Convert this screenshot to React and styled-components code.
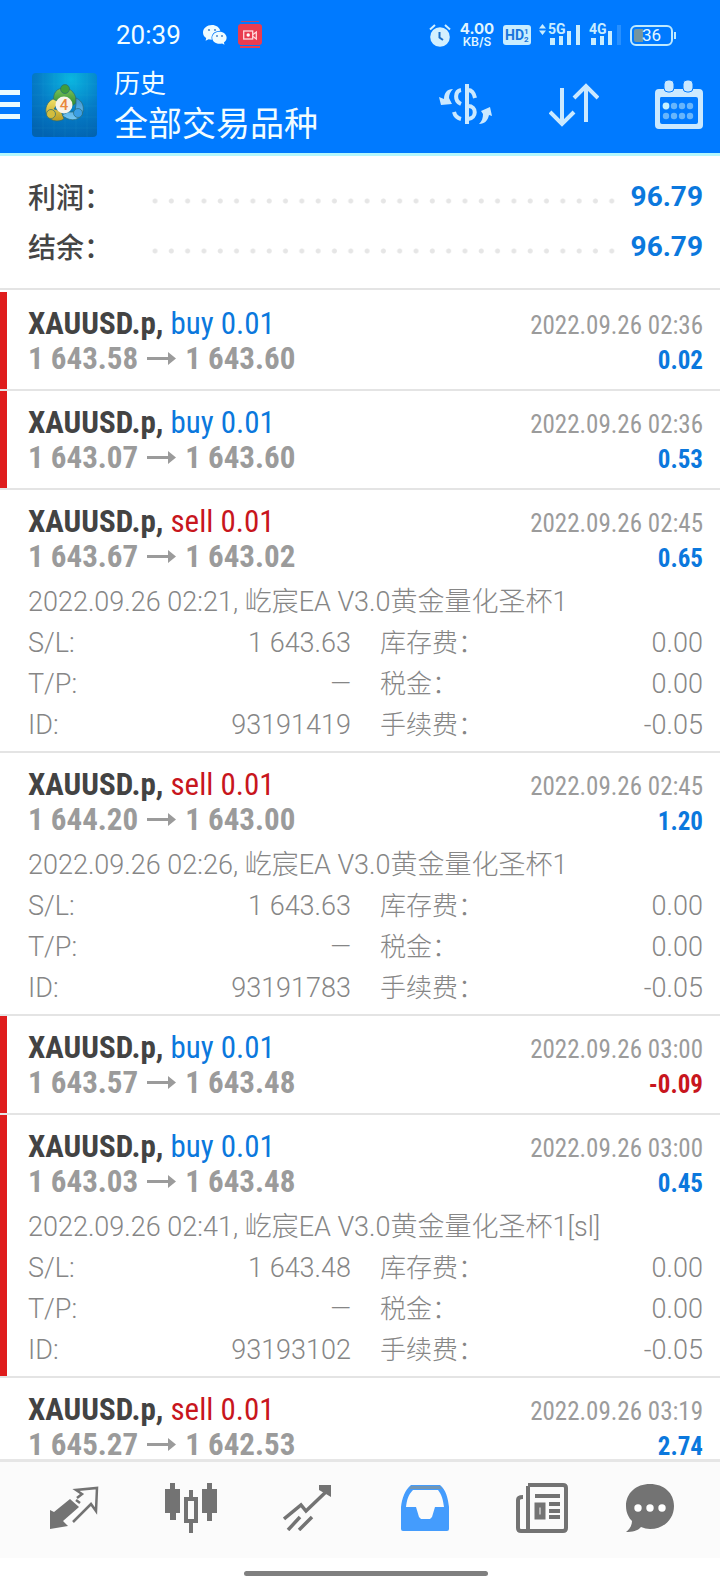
import React from "react";
import styled, { createGlobalStyle } from "styled-components";

const sans = `Roboto, "Noto Sans CJK SC", sans-serif`;
const narrow = `"Roboto Condensed", "Liberation Sans Narrow", Roboto, "Noto Sans CJK SC", sans-serif`;
const blue = "#0b78dd";
const red = "#c8161d";

const GlobalStyle = createGlobalStyle`
  * { box-sizing: border-box; }
  body { margin: 0; background: #fff; font-family: ${sans}; }
  h1, p, dl, dd, dt, ul { margin: 0; padding: 0; font-weight: inherit; }
  ul { list-style: none; }
  svg { display: block; }
`;

const Screen = styled.div`
  display: flex;
  flex-direction: column;
  height: 100vh;
  overflow: hidden;
`;

const Header = styled.header`
  flex: none;
  background: #007aff;
  color: #f2fdff;
  border-bottom: 3px solid #b4f7fc;
`;

const StatusBar = styled.div`
  display: flex;
  align-items: center;
  height: 70px;
  padding: 0 43px 0 116px;
`;

const Clock = styled.time`
  width: 87px;
  font-size: 26px;
  line-height: 30px;
`;

const StatusIcons = styled.div`
  display: flex;
  align-items: center;
  gap: ${(p) => p.$gap}px;
  margin-left: ${(p) => (p.$end ? "auto" : "0")};
`;

const Speed = styled.div`
  width: 36px;
  color: #dff5ff;
  font-family: Inter, sans-serif;
  text-align: center;
`;

const SpeedValue = styled.p`
  font-size: 15px;
  font-weight: 700;
  line-height: 14px;
`;

const SpeedUnit = styled.p`
  font-size: 12px;
  font-weight: 600;
  line-height: 12px;
`;

const Battery = styled.div`
  position: relative;
  width: 43px;
  height: 21px;
  border: 2px solid #bfeaff;
  border-radius: 6px;
  background: linear-gradient(90deg, #74959f 11px, transparent 11px);
  background-clip: content-box;
  padding: 2px;
  margin: 0 4px 0 0;
  font: 400 17px/13px Roboto, sans-serif;
  text-align: center;
  color: #e6f8ff;
  &::after {
    content: "";
    position: absolute;
    right: -5px;
    top: 5px;
    width: 2px;
    height: 7px;
    background: #bfeaff;
  }
`;

const TitleBar = styled.div`
  display: flex;
  align-items: center;
  height: 83px;
  padding: 0 17px 14px 0;
`;

const IconButton = styled.button`
  display: flex;
  align-items: center;
  justify-content: center;
  padding: 0;
  border: 0;
  background: none;
  color: inherit;
`;

const LogoBox = styled.div`
  margin: 0 17px 0 12px;
`;

const Titles = styled.div`
  padding-bottom: 2px;
  font-family: "Noto Sans CJK SC", sans-serif;
  font-weight: 400;
  white-space: nowrap;
`;

const Overline = styled.p`
  font-size: 26px;
  line-height: 36px;
`;

const Title = styled.h1`
  font-size: 34px;
  line-height: 44px;
`;

const Actions = styled.div`
  display: flex;
  align-items: center;
  gap: 56px;
  margin-left: auto;
  color: #cbe9ff;
`;

const Content = styled.main`
  flex: 1;
  min-height: 0;
  overflow-y: auto;
  scrollbar-width: none;
`;

const Summary = styled.dl`
  padding: 15px 17px 17px 28px;
  border-bottom: 2px solid #e4e4e4;
  margin-bottom: 2px;
`;

const SummaryRow = styled.div`
  display: flex;
  align-items: center;
  height: 50px;
  dt {
    width: 119px;
    font-size: 28px;
    font-family: "Noto Sans CJK SC", sans-serif;
    font-weight: 500;
    line-height: 40px;
    color: #454545;
  }
  dd {
    font-size: 28px;
    font-weight: 700;
    color: ${blue};
  }
`;

const Leader = styled.span`
  flex: 1;
  height: 6px;
  margin: 9px 11px 0 0;
  background: radial-gradient(circle at center, #e6e6e6 2px, transparent 3px) 0 0 / 16px 6px;
  background-repeat: space no-repeat;
`;

const Deal = styled.li`
  padding: 14px 17px ${(p) => (p.$open ? 5 : 13)}px 28px;
  box-shadow: ${(p) => (p.$marked ? "inset 7px 0 #df1c1c" : "none")};
  border-bottom: 2px solid #e4e4e4;
`;

const DealLine = styled.div`
  display: flex;
  align-items: baseline;
  justify-content: space-between;
  height: 35px;
  line-height: 35px;
  font-family: ${narrow};
  font-size: 31px;
  white-space: nowrap;
`;

const Symbol = styled.p`
  font-weight: 700;
  color: #434343;
`;

const Side = styled.span`
  font-weight: 400;
  color: ${(p) => (p.$side === "buy" ? blue : red)};
`;

const Prices = styled.p`
  display: flex;
  align-items: center;
  gap: 9px;
  font-weight: 700;
  color: #9b9b9b;
`;

const Time = styled.time`
  font-size: 25px;
  color: #9b9b9b;
`;

const Profit = styled.span`
  font-size: 25px;
  font-weight: 700;
  color: ${(p) => (p.$loss ? red : blue)};
`;

const Details = styled.div`
  padding-top: 8px;
  font-size: 27px;
  font-weight: 300;
  line-height: 41px;
  color: #868686;
  white-space: nowrap;
`;

const DetailGrid = styled.dl`
  display: grid;
  grid-template-columns: 1fr 1fr;
  column-gap: 29px;
`;

const Detail = styled.div`
  display: flex;
  justify-content: space-between;
  height: 41px;
  dt:lang(zh) {
    font-size: 26px;
  }
`;

const NavBar = styled.nav`
  flex: none;
  display: grid;
  grid-template-columns: repeat(5, 117fr) 100fr;
  height: 99px;
  padding: 0 20px 4px 15px;
  border-top: 3px solid #e6e6e6;
  background: #fbfbfb;
`;

const NavButton = styled(IconButton)`
  color: ${(p) => (p.$active ? "#449cfd" : "#737373")};
`;

const HomeArea = styled.div`
  flex: none;
  display: flex;
  justify-content: center;
  padding: 13px 0 8px 12px;
  background: #fff;
`;

const HomeBar = styled.div`
  width: 244px;
  height: 5px;
  border-radius: 3px;
  background: #808080;
`;

const WeChat = () => (
  <svg width="24" height="20" viewBox="0 0 24 20" fill="#effcff">
    <path d="M9 0C4 0 0 3.300 0 7.400c0 2.300 1.200 4.300 3.200 5.700L2.600 15.800l3-1.600c1 .3 2 .5 3.200.5C7.600 9.600 11.300 6 17.300 5.800 16.500 2.400 13 0 9 0Z" />
    <path d="M16.500 6.700c-4.200 0-7.300 2.700-7.300 6.100s3.100 6 7.300 6c.9 0 1.800-.1 2.600-.4l2.400 1.300-.6-2.200c1.600-1.100 2.700-2.800 2.700-4.700 0-3.400-3-6.100-7.100-6.100Z" />
    <g fill="#4d87c9"><circle cx="6" cy="5" r="1.100" /><circle cx="12" cy="5" r="1.100" /><circle cx="14" cy="11" r="1" /><circle cx="19" cy="11" r="1" /></g>
  </svg>
);

const Recorder = () => (
  <svg width="24" height="28" viewBox="0 0 24 28">
    <rect x="0" y="3" width="24" height="21" rx="3" fill="#e93c50" />
    <rect x="3" y="0" width="18" height="1" fill="#b1486f" />
    <rect x="2" y="25" width="20" height="2" fill="#e93c50" />
    <g fill="none" stroke="#ffd9dd" strokeWidth="1.300"><rect x="5.700" y="10" width="9" height="8" /><path d="M15 13.500l3.300-2.500v7L15 15.500" /></g>
    <circle cx="10.200" cy="14" r="1.700" fill="#fff" />
  </svg>
);

const Alarm = () => (
  <svg width="22" height="23" viewBox="0 0 22 23" fill="none" stroke="#d3f0ff" strokeWidth="2">
    <circle cx="11" cy="13" r="9.800" fill="#d3f0ff" stroke="none" />
    <path d="M1 5.500L6 1M16 1l5 4.500" />
    <path d="M10.500 8v5.500l3.500 2.500" stroke="#1c6fc9" />
  </svg>
);

const HD = () => (
  <svg width="28" height="20" viewBox="0 0 28 20">
    <rect width="28" height="20" rx="3" fill="#c9edff" />
    <g fill="#1775dc" fontFamily="Roboto, sans-serif" fontWeight="700">
      <text x="2" y="15" fontSize="14">HD</text>
      <text x="21" y="9" fontSize="8">1</text>
      <text x="21" y="17" fontSize="8">2</text>
    </g>
  </svg>
);

const Signal = ({ label, arrows, weak }) => (
  <svg width={arrows ? 42 : 33} height="32" viewBox={arrows ? "0 -5 42 32" : "9 -5 33 32"} fill="#c9edff">
    {arrows && <path d="M0 4.500L3.500 0 7 4.500zM0 6.500h7L3.500 11z" />}
    <text x="9" y="10" fontSize="14" fontWeight="700" fontFamily="Roboto, sans-serif">{label}</text>
    <rect x="11" y="14" width="5" height="7" />
    <rect x="20" y="12" width="4" height="9" />
    <rect x="28" y="7" width="4" height="14" />
    <rect x="37" y="1" width="4" height="20" opacity={weak ? 0.2 : 1} />
  </svg>
);

const Menu = () => (
  <svg width="20" height="31" viewBox="0 0 20 31" fill="#e9fbff">
    <path d="M0 1h20v5H0zM0 13h20v5H0zM0 25h20v5H0z" />
  </svg>
);

const Logo = () => (
  <svg width="65" height="64" viewBox="0 0 65 64">
    <defs>
      <radialGradient id="sky" cx=".6" cy=".1" r=".95"><stop offset="0" stopColor="#0ab6e0" /><stop offset=".55" stopColor="#057cc6" /><stop offset="1" stopColor="#0263b0" /></radialGradient>
      <linearGradient id="leaf" x2="0" y2="1"><stop stopColor="#7cc45b" /><stop offset="1" stopColor="#27852f" /></linearGradient>
      <linearGradient id="gold" x2="0" y2="1"><stop stopColor="#f1e26a" /><stop offset="1" stopColor="#b99a1f" /></linearGradient>
      <linearGradient id="water" x2="0" y2="1"><stop stopColor="#3b92cf" /><stop offset="1" stopColor="#75c7f4" /></linearGradient>
    </defs>
    <rect width="65" height="64" rx="4" fill="url(#sky)" />
    <path d="M11 0v64M22 0v64M33 0v64M44 0v64M55 0v64M0 11h65M0 22h65M0 33h65M0 44h65M0 55h65" stroke="#5fd0ee" strokeOpacity=".08" />
    <g stroke="#2b6a72" strokeWidth=".7">
      <path d="M22 29c-2-9 3-14 10-14s13 6 12 15l-5 4-4-8c-5-3-9 1-8 7z" fill="url(#leaf)" />
      <path d="M21 26c-6 3-8 9-7 14 2 8 12 10 18 6l-3-8-7-2 5-7z" fill="url(#gold)" />
      <path d="M44 25c7 3 9 10 6 16-4 8-14 7-20 1l6-3 7 0 1-8z" fill="url(#water)" />
      <circle cx="33" cy="16" r="4.500" fill="#3f9d3c" />
      <circle cx="19" cy="41" r="4.500" fill="#d3bd3d" />
      <circle cx="46" cy="40" r="4.500" fill="#3c9fe5" />
    </g>
    <circle cx="32" cy="32" r="8.500" fill="#f7f3ea" />
    <text x="32" y="37" textAnchor="middle" fontSize="15" fontWeight="500" fontFamily="Roboto, sans-serif" fill="#e9883c">4</text>
  </svg>
);

const Exchange = () => (
  <svg width="54" height="42" viewBox="0 0 54 42" fill="none" stroke="currentColor" strokeWidth="4">
    <path d="M28 0v40" />
    <path d="M22 6c-6 1-7 11 0 14M15 28c1 4 3 6 7 7" />
    <path d="M29 6c4 0 6 3 7 8M29 22c9 0 9 12 0 13" />
    <path d="M0 13l5 2C5 9 8 5 14 5 11 8 10 11 10 14l3 6-11 1zM42 27l9-4 2 9-3-1c-1 5-4 9-10 9 3-3 4-6 4-10z" fill="currentColor" stroke="none" />
  </svg>
);

const Sort = () => (
  <svg width="50" height="46" viewBox="0 0 50 46" fill="none" stroke="currentColor" strokeWidth="4">
    <path d="M13 6v36M1 30l12 12 12-12M37 40V4M25 16L37 4l12 12" />
  </svg>
);

const CalendarIcon = () => (
  <svg width="48" height="50" viewBox="0 0 48 50">
    <path fill="currentColor" fillRule="evenodd" d="M4 9h40q4 0 4 4v32q0 4-4 4H4q-4 0-4-4V13q0-4 4-4zm2 8q-1 0-1 2v23q0 2 2 2h34q2 0 2-2V19q0-2-2-2z" />
    <g fill="currentColor" stroke="#007aff" strokeWidth="1"><rect x="9" y="0" width="10" height="12" rx="4" /><rect x="28" y="0" width="10" height="12" rx="4" /></g>
    <g fill="#67b5fb">
      {[19, 27, 35].map((x) => <circle key={x} cx={x} cy="26" r="3.200" />)}
      {[11, 19, 27, 35].map((x) => <circle key={x} cx={x} cy="36" r="3.200" />)}
    </g>
    <circle cx="11" cy="26" r="3.400" fill="#c6f2ff" />
  </svg>
);

const Arrow = () => (
  <svg width="29" height="13" viewBox="0 0 29 13" fill="#9b9b9b">
    <path d="M0 5h21V0l8 6.500-8 6.500V8H0z" />
  </svg>
);

const Quotes = () => (
  <svg width="50" height="44" viewBox="0 0 50 44">
    <path d="M1 24l4 2 16-13 9 8-16 14 5 5L1 43z" fill="currentColor" />
    <path d="M28 12l5-4-6-4 21-2-1 23-5-7-18 18M27 14l4 3" fill="none" stroke="currentColor" strokeWidth="2.500" />
  </svg>
);

const Candles = () => (
  <svg width="52" height="50" viewBox="0 0 52 50" fill="currentColor">
    <path d="M5 0h5v6h5v24h-4v7H5v-7H0V6h5zM42 0h5v6h5v24h-5v8h-5v-8h-5V6h5z" />
    <path fillRule="evenodd" d="M24 7h4v7h5v26h-5v10h-4V40h-5V14h5zm-1 11v18h6V18z" />
  </svg>
);

const Trend = () => (
  <svg width="49" height="46" viewBox="0 0 49 46" fill="none" stroke="currentColor" strokeWidth="3.500">
    <path d="M1 34l17-14 5 6L46 4" />
    <path d="M5 45l12-13M16 45l13-13" />
    <path d="M36 0h12v12l-5-3-7-4z" fill="currentColor" stroke="none" />
  </svg>
);

const Inbox = () => (
  <svg width="50" height="48" viewBox="0 0 50 48" fill="currentColor">
    <path fillRule="evenodd" d="M11 1h29c6 5 8 13 9 22v22q0 2-2 2H3q-2 0-2-2V23C2 14 5 6 11 1zm2 5C8 11 7 16 6 23h10l3 10 2 2h9l2-2 3-10h9C43 16 42 11 38 6z" />
    <path d="M11 2h29l2 3H9z" fill="#7296b4" />
  </svg>
);

const News = () => (
  <svg width="52" height="50" viewBox="0 0 52 50" fill="none" stroke="currentColor" strokeWidth="4">
    <path d="M12 2h35q3 0 3 3v40q0 3-3 3H5q-3 0-3-3V17q0-3 5-3" />
    <path d="M12 3v44M19 13h25" />
    <rect x="21" y="22" width="6" height="12" strokeWidth="5" />
    <path d="M33 21h11M33 28h11M33 34h11" />
  </svg>
);

const Chat = () => (
  <svg width="50" height="50" viewBox="0 0 50 50">
    <path fill="currentColor" d="M25 1C11 1 1 10 1 23c0 7 3 12 6 15 0 4-2 8-6 11 6 0 12-1 15-5 3 1 6 2 9 2 14 0 24-10 24-23S39 1 25 1z" />
    <g fill="#fff"><circle cx="13" cy="25" r="3.700" /><circle cx="25" cy="25" r="3.700" /><circle cx="37" cy="25" r="3.700" /></g>
  </svg>
);

const deals = [
  { side: "buy", open: "1 643.58", close: "1 643.60", time: "2022.09.26 02:36", profit: "0.02", marked: true },
  { side: "buy", open: "1 643.07", close: "1 643.60", time: "2022.09.26 02:36", profit: "0.53", marked: true },
  { side: "sell", open: "1 643.67", close: "1 643.02", time: "2022.09.26 02:45", profit: "0.65", note: "2022.09.26 02:21, 屹宸EA V3.0黄金量化圣杯1", sl: "1 643.63", id: "93191419" },
  { side: "sell", open: "1 644.20", close: "1 643.00", time: "2022.09.26 02:45", profit: "1.20", note: "2022.09.26 02:26, 屹宸EA V3.0黄金量化圣杯1", sl: "1 643.63", id: "93191783" },
  { side: "buy", open: "1 643.57", close: "1 643.48", time: "2022.09.26 03:00", profit: "-0.09", marked: true },
  { side: "buy", open: "1 643.03", close: "1 643.48", time: "2022.09.26 03:00", profit: "0.45", marked: true, note: "2022.09.26 02:41, 屹宸EA V3.0黄金量化圣杯1[sl]", sl: "1 643.48", id: "93193102" },
  { side: "sell", open: "1 645.27", close: "1 642.53", time: "2022.09.26 03:19", profit: "2.74" },
];

const tabs = [
  ["行情", Quotes],
  ["图表", Candles],
  ["交易", Trend],
  ["历史", Inbox],
  ["新闻", News],
  ["消息", Chat],
];

function DealItem({ deal }) {
  const details = deal.note && [
    ["S/L:", deal.sl, "en"],
    ["库存费：", "0.00", "zh"],
    ["T/P:", "—", "en"],
    ["税金：", "0.00", "zh"],
    ["ID:", deal.id, "en"],
    ["手续费：", "-0.05", "zh"],
  ];
  return (
    <Deal $marked={deal.marked} $open={Boolean(deal.note)}>
      <DealLine>
        <Symbol>XAUUSD.p, <Side $side={deal.side}>{deal.side} 0.01</Side></Symbol>
        <Time>{deal.time}</Time>
      </DealLine>
      <DealLine>
        <Prices><span>{deal.open}</span><Arrow /><span>{deal.close}</span></Prices>
        <Profit $loss={deal.profit.startsWith("-")}>{deal.profit}</Profit>
      </DealLine>
      {details && (
        <Details>
          <p>{deal.note}</p>
          <DetailGrid>
            {details.map(([label, value, lang]) => (
              <Detail key={label}><dt lang={lang}>{label}</dt><dd>{value}</dd></Detail>
            ))}
          </DetailGrid>
        </Details>
      )}
    </Deal>
  );
}

export default function App() {
  return (
    <Screen>
      <GlobalStyle />
      <Header>
        <StatusBar>
          <Clock>20:39</Clock>
          <StatusIcons $gap={11}><WeChat /><Recorder /></StatusIcons>
          <StatusIcons $gap={8} $end>
            <Alarm />
            <Speed>
              <SpeedValue>4.00</SpeedValue>
              <SpeedUnit>KB/S</SpeedUnit>
            </Speed>
            <HD />
            <Signal label="5G" arrows />
            <Signal label="4G" weak />
            <Battery>36</Battery>
          </StatusIcons>
        </StatusBar>
        <TitleBar>
          <IconButton aria-label="菜单"><Menu /></IconButton>
          <LogoBox><Logo /></LogoBox>
          <Titles>
            <Overline>历史</Overline>
            <Title>全部交易品种</Title>
          </Titles>
          <Actions>
            <IconButton aria-label="交易品种"><Exchange /></IconButton>
            <IconButton aria-label="排序"><Sort /></IconButton>
            <IconButton aria-label="日期"><CalendarIcon /></IconButton>
          </Actions>
        </TitleBar>
      </Header>
      <Content>
        <Summary>
          <SummaryRow><dt>利润：</dt><Leader /><dd>96.79</dd></SummaryRow>
          <SummaryRow><dt>结余：</dt><Leader /><dd>96.79</dd></SummaryRow>
        </Summary>
        <ul>{deals.map((deal, i) => <DealItem key={i} deal={deal} />)}</ul>
      </Content>
      <NavBar>
        {tabs.map(([label, Icon]) => (
          <NavButton key={label} aria-label={label} $active={Icon === Inbox}><Icon /></NavButton>
        ))}
      </NavBar>
      <HomeArea><HomeBar /></HomeArea>
    </Screen>
  );
}
